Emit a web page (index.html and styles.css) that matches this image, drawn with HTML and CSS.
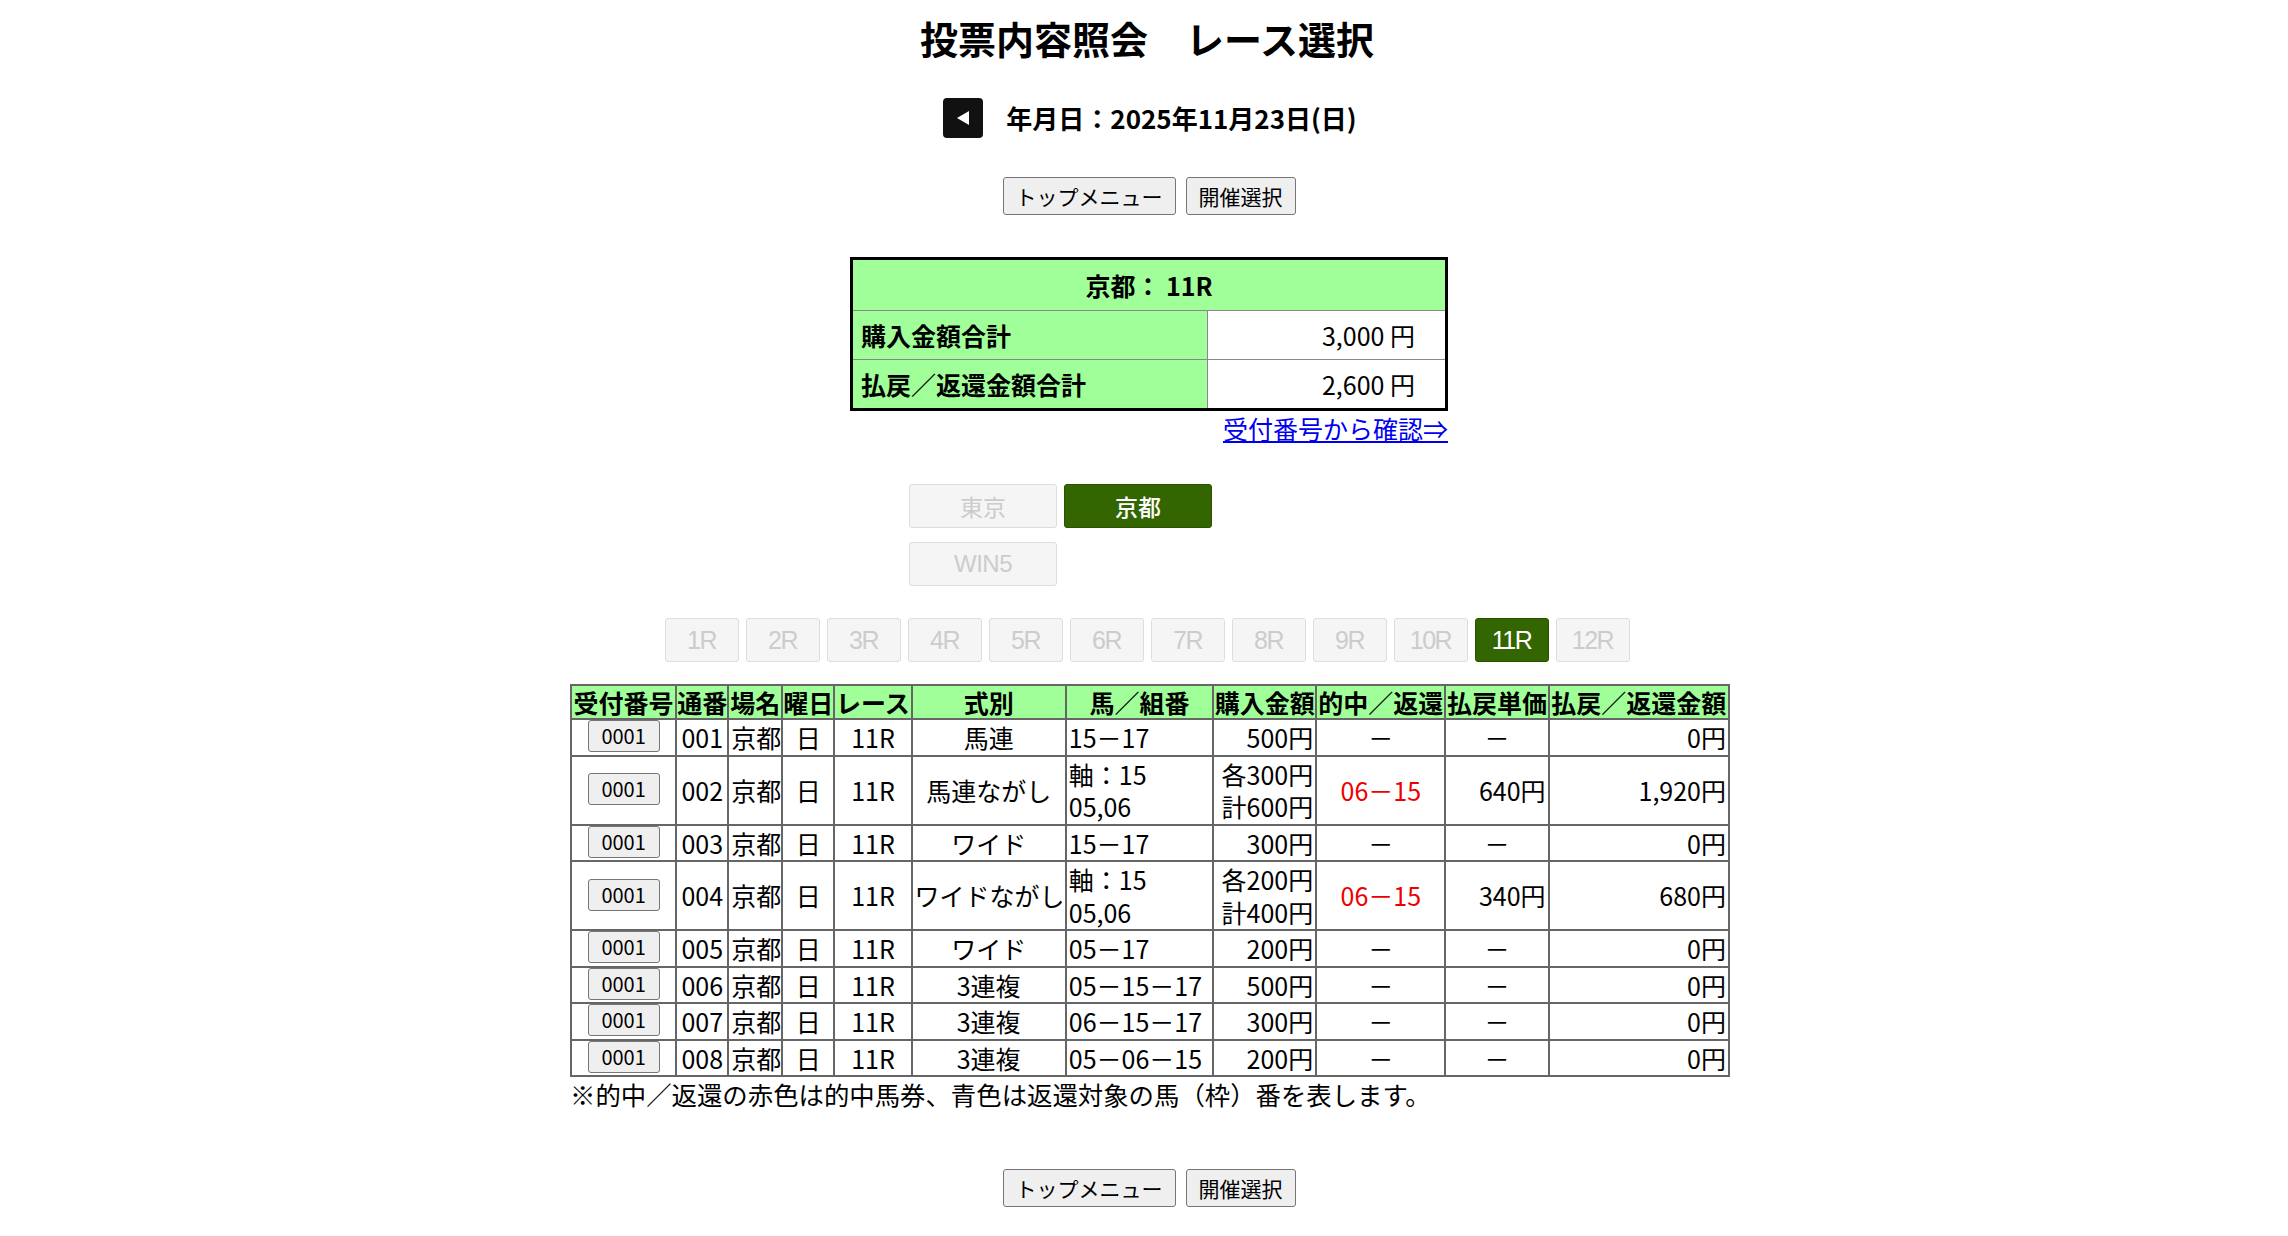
FILE: index.html
```html
<!DOCTYPE html>
<html lang="ja">
<head>
<meta charset="utf-8">
<title>投票内容照会 レース選択</title>
<link rel="stylesheet" href="styles.css">
</head>
<body>
<div class="page">
  <h1 class="title">投票内容照会　レース選択</h1>

  <div class="date-row">
    <span class="prev-btn"><svg width="14" height="16" viewBox="0 0 14 16"><polygon points="13,1 13,15 1,8" fill="#fff"/></svg></span>
    <span class="date">年月日：2025年11月23日(日)</span>
  </div>

  <div class="btn-row">
    <button class="std-btn">トップメニュー</button>
    <button class="std-btn">開催選択</button>
  </div>

  <div class="summary-wrap">
    <table class="summary">
      <tr><th colspan="2" class="sum-head">京都： 11R</th></tr>
      <tr><th class="sum-label">購入金額合計</th><td class="sum-value">3,000 円</td></tr>
      <tr><th class="sum-label">払戻／返還金額合計</th><td class="sum-value">2,600 円</td></tr>
    </table>
    <div class="link-row"><a href="#" class="confirm-link">受付番号から確認⇒</a></div>
  </div>

  <div class="venues">
    <span class="tab disabled">東京</span>
    <span class="tab active">京都</span>
    <span class="tab-empty"></span>
    <span class="tab disabled latin">WIN5</span>
  </div>

  <div class="races">
    <span class="race disabled">1R</span>
    <span class="race disabled">2R</span>
    <span class="race disabled">3R</span>
    <span class="race disabled">4R</span>
    <span class="race disabled">5R</span>
    <span class="race disabled">6R</span>
    <span class="race disabled">7R</span>
    <span class="race disabled">8R</span>
    <span class="race disabled">9R</span>
    <span class="race disabled">10R</span>
    <span class="race active">11R</span>
    <span class="race disabled">12R</span>
  </div>

  <div class="result-wrap">
    <table class="result">
      <colgroup>
        <col class="c1"><col class="c2"><col class="c3"><col class="c4"><col class="c5"><col class="c6"><col class="c7"><col class="c8"><col class="c9"><col class="c10"><col class="c11">
      </colgroup>
      <tr>
        <th>受付番号</th><th>通番</th><th>場名</th><th>曜日</th><th>レース</th><th>式別</th><th>馬／組番</th><th>購入金額</th><th>的中／返還</th><th>払戻単価</th><th>払戻／返還金額</th>
      </tr>
      <tr>
        <td class="btn-cell"><button class="no-btn">0001</button></td><td class="ctr">001</td><td>京都</td><td class="ctr">日</td><td class="ctr">11R</td><td class="ctr">馬連</td><td>15－17</td><td class="rt">500円</td><td class="ctr">－</td><td class="ctr">－</td><td class="rt">0円</td>
      </tr>
      <tr>
        <td class="btn-cell"><button class="no-btn">0001</button></td><td class="ctr">002</td><td>京都</td><td class="ctr">日</td><td class="ctr">11R</td><td class="ctr">馬連ながし</td><td>軸：15<br>05,06</td><td class="rt">各300円<br>計600円</td><td class="ctr hit">06－15</td><td class="rt">640円</td><td class="rt">1,920円</td>
      </tr>
      <tr>
        <td class="btn-cell"><button class="no-btn">0001</button></td><td class="ctr">003</td><td>京都</td><td class="ctr">日</td><td class="ctr">11R</td><td class="ctr">ワイド</td><td>15－17</td><td class="rt">300円</td><td class="ctr">－</td><td class="ctr">－</td><td class="rt">0円</td>
      </tr>
      <tr>
        <td class="btn-cell"><button class="no-btn">0001</button></td><td class="ctr">004</td><td>京都</td><td class="ctr">日</td><td class="ctr">11R</td><td class="ctr">ワイドながし</td><td>軸：15<br>05,06</td><td class="rt">各200円<br>計400円</td><td class="ctr hit">06－15</td><td class="rt">340円</td><td class="rt">680円</td>
      </tr>
      <tr>
        <td class="btn-cell"><button class="no-btn">0001</button></td><td class="ctr">005</td><td>京都</td><td class="ctr">日</td><td class="ctr">11R</td><td class="ctr">ワイド</td><td>05－17</td><td class="rt">200円</td><td class="ctr">－</td><td class="ctr">－</td><td class="rt">0円</td>
      </tr>
      <tr>
        <td class="btn-cell"><button class="no-btn">0001</button></td><td class="ctr">006</td><td>京都</td><td class="ctr">日</td><td class="ctr">11R</td><td class="ctr">3連複</td><td>05－15－17</td><td class="rt">500円</td><td class="ctr">－</td><td class="ctr">－</td><td class="rt">0円</td>
      </tr>
      <tr>
        <td class="btn-cell"><button class="no-btn">0001</button></td><td class="ctr">007</td><td>京都</td><td class="ctr">日</td><td class="ctr">11R</td><td class="ctr">3連複</td><td>06－15－17</td><td class="rt">300円</td><td class="ctr">－</td><td class="ctr">－</td><td class="rt">0円</td>
      </tr>
      <tr>
        <td class="btn-cell"><button class="no-btn">0001</button></td><td class="ctr">008</td><td>京都</td><td class="ctr">日</td><td class="ctr">11R</td><td class="ctr">3連複</td><td>05－06－15</td><td class="rt">200円</td><td class="ctr">－</td><td class="ctr">－</td><td class="rt">0円</td>
      </tr>
    </table>
    <p class="note">※的中／返還の赤色は的中馬券、青色は返還対象の馬（枠）番を表します。</p>
  </div>

  <div class="btn-row bottom">
    <button class="std-btn">トップメニュー</button>
    <button class="std-btn">開催選択</button>
  </div>
</div>
</body>
</html>
```

FILE: styles.css
```css
html, body {
  margin: 0;
  padding: 0;
  background: #fff;
}
body {
  font-family: "Noto Sans CJK JP", "Noto Sans", sans-serif;
  color: #000;
}
.page {
  display: flex;
  flex-direction: column;
  align-items: center;
  padding-left: 6px;
}
.title {
  margin: 13px 0 0;
  font-size: 38px;
  line-height: 50px;
  font-weight: bold;
}
.date-row {
  margin-top: 35px;
  display: flex;
  align-items: center;
  gap: 23px;
  height: 40px;
  padding-left: 6px;
}
.prev-btn {
  width: 40px;
  height: 40px;
  background: #111;
  border-radius: 4px;
  display: flex;
  align-items: center;
  justify-content: center;
}
.date {
  font-size: 26px;
  font-weight: bold;
  line-height: 40px;
}
.btn-row {
  margin-top: 39px;
  display: flex;
  gap: 10px;
  padding-left: 4px;
}
.btn-row.bottom {
  margin-top: 60px;
}
.std-btn {
  font-family: "Noto Sans CJK JP", sans-serif;
  font-size: 21px;
  height: 38px;
  line-height: 34px;
  padding: 0 12px;
  background: #efefef;
  border: 1px solid #767676;
  border-radius: 3px;
  color: #000;
}
.summary-wrap {
  margin-top: 42px;
  display: flex;
  flex-direction: column;
  padding-left: 4px;
}
.summary {
  width: 598px;
  border: 3px solid #000;
  border-collapse: collapse;
  font-size: 25px;
}
.summary th, .summary td {
  border: 1px solid #888;
  line-height: 36px;
}
.sum-head {
  background: #a0ff99;
  height: 50px;
  text-align: center;
  font-weight: bold;
  padding: 0;
}
.sum-label {
  background: #a0ff99;
  text-align: left;
  font-weight: bold;
  padding: 6px 8px;
  width: 338px;
}
.sum-value {
  text-align: right;
  padding: 6px 30px 6px 8px;
  background: #fff;
}
.link-row {
  display: flex;
  justify-content: flex-end;
  margin-top: 2px;
}
.confirm-link {
  color: #0000ee;
  text-decoration: underline;
  font-size: 25px;
  line-height: 30px;
}
.venues {
  margin-top: 41px;
  width: 476px;
  display: grid;
  grid-template-columns: repeat(3, 148px);
  column-gap: 7px;
  row-gap: 14px;
}
.tab {
  height: 44px;
  box-sizing: border-box;
  border-radius: 3px;
  display: flex;
  align-items: center;
  justify-content: center;
  font-size: 23px;
}
.tab.latin {
  font-family: "Liberation Sans", Arial, sans-serif;
  font-size: 24px;
  letter-spacing: -0.5px;
}
.tab.disabled {
  background: #f5f5f5;
  border: 1px solid #ddd;
  color: #ccc;
}
.tab.active {
  background: #336600;
  border: 1px solid #2a5200;
  color: #fff;
  font-weight: 500;
}
.races {
  margin-top: 32px;
  display: flex;
  gap: 7px;
}
.race {
  width: 74px;
  height: 44px;
  box-sizing: border-box;
  border-radius: 3px;
  display: flex;
  align-items: center;
  justify-content: center;
  font-family: "Liberation Sans", Arial, sans-serif;
  font-size: 25px;
  letter-spacing: -1.5px;
}
.race.disabled {
  background: #f5f5f5;
  border: 1px solid #ddd;
  color: #ccc;
}
.race.active {
  background: #336600;
  border: 1px solid #2a5200;
  color: #fff;
}
.result-wrap {
  margin-top: 22px;
  display: flex;
  flex-direction: column;
  align-items: flex-start;
  padding-left: 6px;
}
.result {
  border-collapse: collapse;
  table-layout: fixed;
  width: 1160px;
  border: 2px solid #666;
  font-size: 25px;
}
.result .c1 { width: 105px; }
.result .c2 { width: 52px; }
.result .c3 { width: 54px; }
.result .c4 { width: 52px; }
.result .c5 { width: 77px; }
.result .c6 { width: 154px; }
.result .c7 { width: 147px; }
.result .c8 { width: 103px; }
.result .c9 { width: 129px; }
.result .c10 { width: 103px; }
.result .c11 { width: 180px; }
.result th, .result td {
  border: 2px solid #666;
  padding: 1px 2px;
  white-space: nowrap;
}
.result th {
  background: #a0ff99;
  font-weight: bold;
  line-height: 32px;
  text-align: center;
  padding: 0;
}
.result td {
  line-height: 32.5px;
  text-align: left;
  vertical-align: middle;
}
.result td.ctr { text-align: center; }
.result td.rt { text-align: right; }
.result td.hit { color: #ee0000; }
.result td.btn-cell {
  padding: 0 2px;
}
.no-btn {
  display: block;
  margin: -1px auto 1px;
  font-family: "Noto Sans CJK JP", sans-serif;
  font-size: 20px;
  width: 72px;
  height: 32px;
  line-height: 28px;
  padding: 0;
  background: #efefef;
  border: 1px solid #767676;
  border-radius: 3px;
  color: #000;
}
.note {
  margin: 2px 0 0;
  font-size: 25.4px;
  line-height: 30px;
}
```
